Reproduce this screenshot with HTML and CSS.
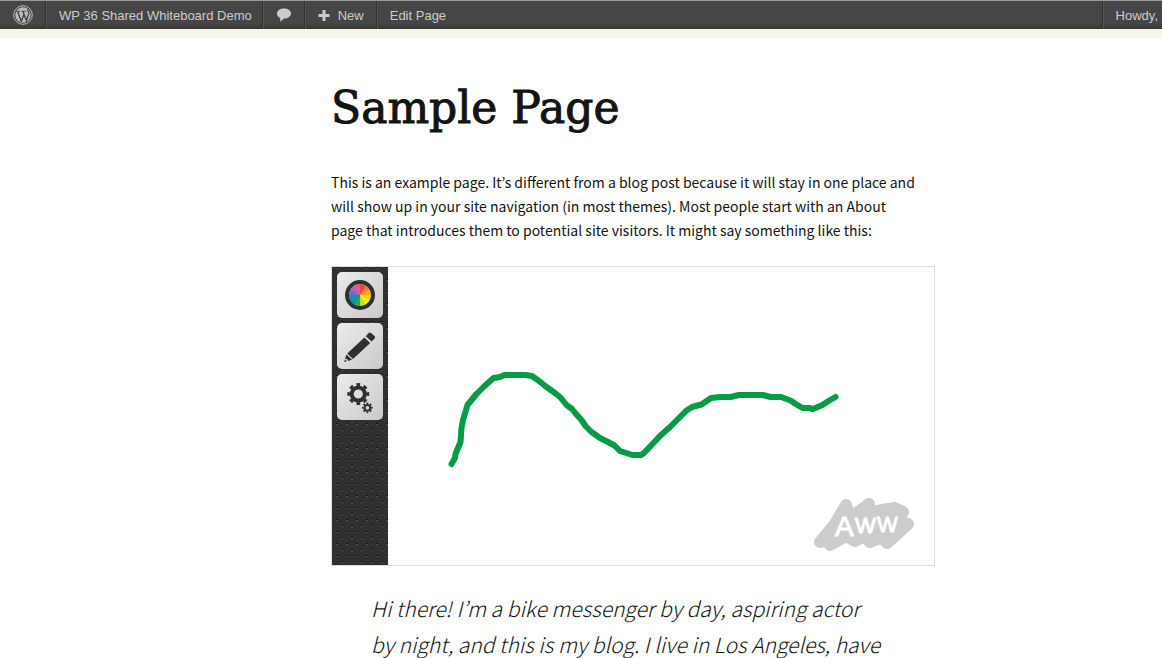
FILE: index.html
```html
<!DOCTYPE html>
<html lang="en">
<head>
<meta charset="utf-8">
<title>Sample Page</title>
<link rel="stylesheet" href="styles.css">
</head>
<body>
<nav class="adminbar" aria-label="Toolbar">
  <a class="item" href="#" aria-label="About WordPress">
    <svg width="20" height="20" viewBox="0 0 20 20" fill="none" stroke="#bbb">
      <circle cx="10" cy="10" r="9.3" stroke-width="1"/>
      <circle cx="10" cy="10" r="7.7" fill="#bbb" stroke="none"/>
      <path d="M3.4 6.3h3.8M8.6 6.3h4.2" stroke="#464646" stroke-width="1"/>
      <path d="M4.6 6.5l3.9 10.4M10 6.5l3.8 10.2M8.3 16.6l2.6-7.2M13.4 15.6l2.5-7.2c.4-1.4-1.7-2.2-1.2-4" stroke="#464646" stroke-width="1.4"/>
    </svg>
  </a>
  <a class="item text site" href="#">WP 36 Shared Whiteboard Demo</a>
  <a class="item" href="#" aria-label="Comments">
    <svg width="16" height="14" viewBox="0 0 16 14" fill="#ccc"><path d="M8 .5c4 0 7 2.100 7 5s-3 5-7 5l-3.900 3.200.2-3.700C2.200 9.200 1 7.500 1 5.500c0-2.900 3-5 7-5z"/></svg>
  </a>
  <a class="item text" href="#">
    <svg width="12" height="12" viewBox="0 0 12 12" fill="#ccc"><path d="M4.500 0h3v4h4v3h-4v4h-3v-4h-4v-3h4z"/></svg>
    New</a>
  <a class="item text" href="#">Edit Page</a>
  <a class="item text account" href="#">Howdy,</a>
</nav>
<main class="page">
  <article class="entry">
    <h1 class="title">Sample Page</h1>
    <p class="intro">This is an example page. It’s different from a blog post because it will stay in one place and<br>will show up in your site navigation (in most themes). Most people start with an About<br>page that introduces them to potential site visitors. It might say something like this:</p>
    <section class="board" aria-label="Shared whiteboard">
      <div class="tools">
        <button class="tool" type="button" aria-label="Color">
          <span class="wheel"></span>
        </button>
        <button class="tool" type="button" aria-label="Pencil">
          <svg width="46" height="46" viewBox="0 0 46 46" fill="#303030">
            <path d="M31.600 9.900q1.200-1 2.400 0l3.600 3.200q1 1.200 0 2.300l-3 3.200-5.800-5.400z"/>
            <path d="M27.400 14.500l5.800 5.400L16 36l-5.800-5.400z"/>
            <path d="M9.400 31.400l5.700 5.400-4.200 1.300-.2-1.500-2.600-.9z"/>
            <path d="M7.900 36.500l2 1.800-2.700.8z"/>
          </svg>
        </button>
        <button class="tool" type="button" aria-label="Settings">
          <svg width="46" height="46" viewBox="0 0 46 46" fill="none" stroke="#303030">
            <circle cx="21.300" cy="20" r="6.600" stroke-width="4"/>
            <circle cx="21.300" cy="20" r="9.500" stroke-width="3" stroke-dasharray="3.730 3.730" pathLength="59.680" stroke-dashoffset="1.860"/>
            <circle cx="30.400" cy="33.800" r="2.900" stroke-width="2"/>
            <circle cx="30.400" cy="33.800" r="4.500" stroke-width="1.700" stroke-dasharray="1.770 1.770" pathLength="28.320" stroke-dashoffset=".88"/>
          </svg>
        </button>
      </div>
      <svg class="canvas" viewBox="388 267 546 298" role="img" aria-label="Drawing">
        <path class="stroke" d="M451.500 464L455 458L455.500 454L460.500 442L461.500 428L463 420L467.500 405L476.500 394L483.500 387L493.500 378L500 377L504.500 375L525.500 375L532 376L539 381L546.500 387L555 393L560.500 397.500L566.500 405L572 409L576 414L581.500 420L585.500 426L591.500 432L600 438L608 442L614.500 445.500L620 451L632.500 455L641 455L644 453L660 436L670 427L686.500 410.500L692 407L701.500 404.500L711 398L720 397L730.500 397L739 395L763 395L770.500 397L781 397L790.500 400.500L796.500 404.500L802.500 408L809 408L813 409L822.500 405L828.500 401L835.500 397"/>
        <g class="logo">
          <path d="M820 542L835 524L846 505L850 518L869 504L870 513L882 510L895 508L903 512L898 522L908 524L887 543L882 537L870 542L864 536L855 541L846 536L830 545L832 538z"/>
          <text x="835" y="536" font-size="28">A</text>
          <text x="855" y="533" font-size="22">W</text>
          <text x="877" y="532" font-size="22">W</text>
        </g>
      </svg>
    </section>
    <blockquote class="quote">Hi there! I’m a bike messenger by day, aspiring actor<br>by night, and this is my blog. I live in Los Angeles, have</blockquote>
  </article>
</main>
</body>
</html>
```
FILE: styles.css
```css
* { box-sizing: border-box; }
body {
  margin: 0;
  background: #f7f5e7;
  color: #141412;
  font-family: "Noto Sans CJK JP", "Open Sans", sans-serif;
}
.adminbar {
  display: flex;
  height: 29px;
  border-top: 1px solid #9a9c9a;
  background: linear-gradient(#464646 80%, #373737);
  font: 13px/26px "Liberation Sans", Arial, sans-serif;
}
.item {
  display: flex;
  align-items: center;
  gap: 8px;
  height: 28px;
  padding: 0 12px;
  border-right: 1px solid #333;
  border-left: 1px solid #555;
  color: #ccc;
  text-decoration: none;
  white-space: nowrap;
}
.item:first-child { border-left-color: transparent; }
.item:nth-child(5) { border-right: 0; }
.text { padding-top: 2px; }
.site { padding-right: 10px; }
.account {
  margin-left: auto;
  padding-right: 4px;
  border-right: 0;
  box-shadow: -1px 0 #333;
}
.page {
  margin-top: 9px;
  padding: 40px 20px 0;
  background: #fff;
}
.entry {
  max-width: 708px;
  margin: 0 auto;
  padding-left: 104px;
}
.title {
  margin: 0 0 32px;
  font: 44px/60px "DejaVu Serif", serif;
  -webkit-text-stroke: 1px #141412;
}
.intro {
  margin: 0 0 24px;
  font-size: 14px;
  line-height: 24px;
  white-space: nowrap;
}
.board {
  display: flex;
  height: 300px;
  border: 1px solid #ddd;
}
.tools {
  display: flex;
  flex-direction: column;
  gap: 5px;
  padding: 5px;
  background: #303030 url("data:image/svg+xml,%3Csvg xmlns='http://www.w3.org/2000/svg' width='10' height='12'%3E%3Cpath fill='%23151515' d='M4 0h2v1H4zM9 6h1v1H9zM0 6h1v1H0z'/%3E%3Cpath fill='%23505050' d='M4 1h2v1H4zM9 7h1v1H9zM0 7h1v1H0z'/%3E%3C/svg%3E");
}
.tool {
  display: grid;
  place-items: center;
  width: 46px;
  height: 46px;
  padding: 0;
  border: 0;
  border-radius: 5px;
  background: linear-gradient(135deg, #ececec, #c9c9c9);
}
.wheel {
  width: 30px;
  height: 30px;
  border: 4px solid #303030;
  border-radius: 50%;
  background: conic-gradient(#f0453f 30deg, #f77b3a 30deg 60deg, #fba81e 60deg 90deg, #fdd20b 90deg 120deg, #ffed00 120deg 150deg, #c4da30 150deg 180deg, #22ac4b 180deg 210deg, #009c9b 210deg 240deg, #1689cb 240deg 270deg, #7d67ba 270deg 300deg, #b565bd 300deg 330deg, #e75b93 330deg) padding-box;
}
.canvas {
  flex: 1;
  min-width: 0;
  height: 100%;
}
.stroke {
  fill: none;
  stroke: #079a47;
  stroke-width: 6;
  stroke-linecap: round;
  stroke-linejoin: round;
}
.logo path {
  fill: #ccc;
  stroke: #ccc;
  stroke-width: 12;
  stroke-linecap: round;
  stroke-linejoin: round;
}
.logo text {
  fill: #fff;
  stroke: #fff;
  stroke-linejoin: round;
  font-family: "Liberation Sans", sans-serif;
}
.quote {
  margin: 24px 40px 0;
  font-size: 21px;
  font-style: italic;
  font-weight: 300;
  line-height: 36px;
  white-space: nowrap;
}
```
